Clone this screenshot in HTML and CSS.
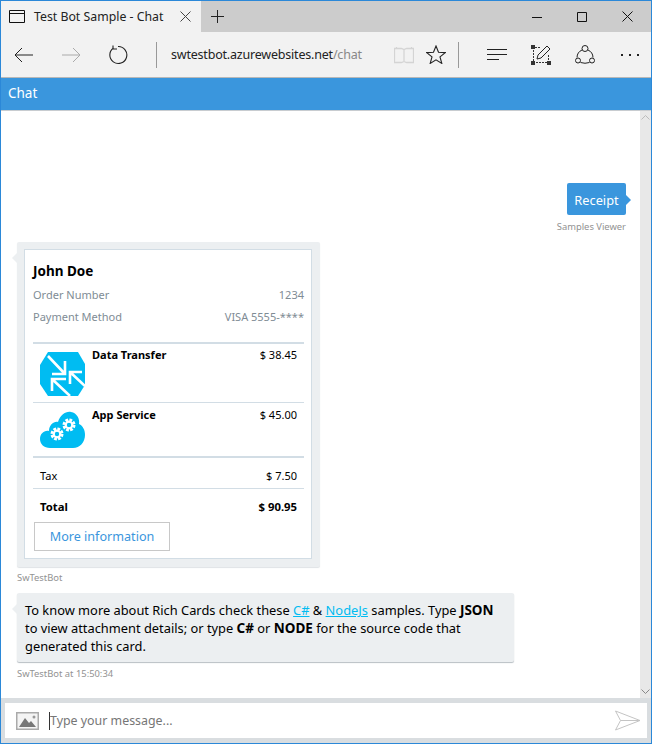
FILE: index.html
```html
<!DOCTYPE html>
<html>
<head>
<meta charset="UTF-8">
<title>Test Bot Sample - Chat</title>
<link rel="stylesheet" href="styles.css">
</head>
<body>
<div class="window">
	<!-- tabs -->
	<div class="tabbar">
		<div class="tab">
			<svg class="tabicon" width="16" height="13" viewBox="0 0 16 13"><path d="M.5.5h15v12H.5zM.5 3.500h15" fill="none" stroke="#111"/></svg>
			<span class="tabtitle">Test Bot Sample - Chat</span>
			<svg class="tabclose" width="11" height="11" viewBox="0 0 11 11"><path d="M.5.5l10 10M10.500.5l-10 10" stroke="#444" fill="none"/></svg>
		</div>
		<svg class="newtab" width="13" height="13" viewBox="0 0 13 13"><path d="M6.500 0v13M0 6.500h13" stroke="#222" fill="none"/></svg>
		<div class="wincontrols">
			<svg width="10" height="10" viewBox="0 0 10 10"><path d="M0 5.500h10" stroke="#111" fill="none"/></svg>
			<svg width="10" height="10" viewBox="0 0 10 10"><path d="M.5.5h9v9h-9z" stroke="#111" fill="none"/></svg>
			<svg width="11" height="11" viewBox="0 0 11 11"><path d="M.5.5l10 10M10.500.5l-10 10" stroke="#111" fill="none"/></svg>
		</div>
	</div>
	<!-- address bar -->
	<div class="toolbar">
		<svg class="navicon first" width="20" height="16" viewBox="0 0 20 16"><path d="M19 8H1M8 1L1 8l7 7" stroke="#222" fill="none"/></svg>
		<svg class="navicon" width="20" height="16" viewBox="0 0 20 16"><path d="M1 8h18M12 1l7 7-7 7" stroke="#aaa" fill="none"/></svg>
		<svg class="navicon" width="20" height="20" viewBox="0 0 20 20"><path d="M5.500 3A8.500 8.500 0 1 0 10 1.500M5 .5v3.500h4" stroke="#222" stroke-width="1.100" fill="none"/></svg>
		<div class="sep sep1"></div>
		<div class="url">swtestbot.azurewebsites.net<span class="urlpath">/chat</span></div>
		<svg class="readicon" width="20" height="18" viewBox="0 0 20 18"><path d="M.5 2.500h7l2.500 1 2.500-1h7v14h-7l-2.500-1-2.500 1h-7zM10 3.500v12M2.500 1v1.500M17.500 1v1.500" stroke="#d4d4d4" stroke-width="1.300" fill="none"/></svg>
		<svg class="staricon" width="20" height="19" viewBox="0 0 20 19"><path d="M10 1l2.500 6.200 6.800.4-5.300 4.300 1.800 6.500L10 14.800l-5.800 3.600L6 11.900.7 7.600l6.800-.4z" stroke="#222" stroke-width="1.100" fill="none"/></svg>
		<div class="sep"></div>
		<svg class="hubicon" width="20" height="13" viewBox="0 0 20 13"><path d="M0 1.500h20M0 6.500h20M0 11.500h12" stroke="#222" fill="none"/></svg>
		<svg class="noteicon" width="20" height="20" viewBox="0 0 20 20"><path d="M4 2.500h6M2.500 5v11M5 17.500h12M17.500 10v5" stroke="#333" stroke-dasharray="2 1" fill="none"/><path d="M0 0h4v4H0zM0 16h4v4H0zM16 16h4v4h-4z" fill="#333"/><path d="M6 14l1-4L16 1l3 3-9 9z" stroke="#222" fill="none"/></svg>
		<svg class="shareicon" width="20" height="20" viewBox="0 0 20 20"><path d="M7 5A8.500 8.500 0 0 0 2 12.500M13 5A8.500 8.500 0 0 1 18 12.500M5.500 17.500q4.500 1.500 9 0" stroke="#222" fill="none"/><circle cx="10" cy="3.500" r="3" stroke="#222" fill="none"/><circle cx="3" cy="15.500" r="2.500" stroke="#222" fill="none"/><circle cx="17" cy="15.500" r="2.500" stroke="#222" fill="none"/></svg>
		<div class="moreicon"><i></i><i></i><i></i></div>
	</div>
	<div class="appbar">Chat</div>

	<!-- chat history -->
	<div class="history">
		<div class="messages">
			<div class="outgoing">
				<div class="receipt-btn">Receipt</div>
				<div class="meta">Samples Viewer</div>
			</div>
			<div class="cardwrap">
				<div class="card">
					<div class="name">John Doe</div>
					<div class="inforow"><span>Order Number</span><span>1234</span></div>
					<div class="inforow"><span>Payment Method</span><span>VISA 5555-****</span></div>
					<div class="item item-first">
						<svg class="itemicon" width="45" height="44" viewBox="0 0 45 44">
							<path d="M8 0h30l7 12v21l-7 11H8L0 32V13z" fill="#00bcf2"/>
							<path d="M8 4l17 18M25 9v13H12M30 44L12 27M12 39V27h14M45 34L30 20M30 32V20h12" stroke="#fff" stroke-width="2.600" fill="none"/>
						</svg>
						<div class="itemname">Data Transfer</div>
						<div class="itemprice">$ 38.45</div>
					</div>
					<div class="item item-last">
						<svg class="itemicon" width="45" height="37" viewBox="0 0 45 37">
							<path d="M10 37C4 37 0 33 0 28c0-5 4-9 9-8 0-6 5-10 9-9 2-7 8-11 13-10 6 1 9 7 8 12 4 2 6 6 6 11 0 7-5 13-12 13z" fill="#00bcf2"/>
							<circle cx="17" cy="23" r="4.500" fill="none" stroke="#fff" stroke-width="4" stroke-dasharray="2.400 1.100"/>
							<circle cx="17" cy="23" r="3.300" fill="none" stroke="#fff" stroke-width="2.200"/>
							<circle cx="29" cy="14" r="4.500" fill="none" stroke="#fff" stroke-width="4" stroke-dasharray="2.400 1.100"/>
							<circle cx="29" cy="14" r="3.300" fill="none" stroke="#fff" stroke-width="2.200"/>
						</svg>
						<div class="itemname">App Service</div>
						<div class="itemprice">$ 45.00</div>
					</div>
					<div class="sumrow tax"><span>Tax</span><span>$ 7.50</span></div>
					<div class="sumrow total"><span>Total</span><span>$ 90.95</span></div>
					<div class="morebtn">More information</div>
				</div>
			</div>
			<div class="meta meta-card">SwTestBot</div>
			<div class="bubble">
				<div>To know more about Rich Cards check these <a href="#">C#</a> &amp; <a href="#">NodeJs</a> samples. Type <b>JSON</b></div>
				<div>to view attachment details; or type <b>C#</b> or <b>NODE</b> for the source code that</div>
				<div>generated this card.</div>
			</div>
			<div class="meta">SwTestBot at 15:50:34</div>
		</div>
		<div class="scrollbar">
			<svg width="9" height="5" viewBox="0 0 9 5"><path d="M.5 4.500l4-4 4 4" stroke="#bbb" fill="none"/></svg>
			<svg width="9" height="5" viewBox="0 0 9 5"><path d="M.5.500l4 4 4-4" stroke="#888" fill="none"/></svg>
		</div>
	</div>

	<!-- input -->
	<div class="inputbar">
		<div class="inputbox">
			<svg class="imgicon" width="23" height="18" viewBox="0 0 23 18"><rect x=".75" y=".75" width="21.500" height="16.500" fill="#f4f4f4" stroke="#aaa" stroke-width="1.500"/><path d="M3 15l6-9 4 5 2-2 5 6z" fill="#777"/><circle cx="18" cy="5" r="1.500" fill="#999"/></svg>
			<div class="caret"></div>
			<div class="placeholder">Type your message...</div>
			<svg class="sendicon" width="26" height="21" viewBox="0 0 26 21"><path d="M.5 1L25 10.500.5 20l5-9.500zM5.500 10.500H25" stroke="#c4c4c4" fill="none"/></svg>
		</div>
	</div>
</div>
</body>
</html>
```

FILE: styles.css
```css
html, body
{
	margin: 0;
	padding: 0;
}
body
{
	font-family: "Noto Sans", "Open Sans", sans-serif;
	background: #ffffff;
}
.window
{
	width: 652px;
	height: 744px;
	box-sizing: border-box;
	border: 1px solid #2b88d8;
	display: flex;
	flex-direction: column;
	overflow: hidden;
}
/* tabs */
.tabbar
{
	height: 31px;
	background: #cccccc;
	display: flex;
	align-items: center;
	flex: none;
}
.tab
{
	width: 200px;
	height: 31px;
	background: #f2f2f2;
	display: flex;
	align-items: center;
	flex: none;
}
.tabicon
{
	margin-left: 8px;
}
.tabtitle
{
	margin-left: 9px;
	font-size: 12.300px;
	color: #222222;
	width: 146px;
	white-space: nowrap;
}
.newtab
{
	margin-left: 10px;
}
.wincontrols
{
	margin-left: auto;
	display: flex;
	align-items: center;
	gap: 35px;
	margin-right: 18px;
}
.toolbar
{
	height: 45px;
	background: #f2f2f2;
	border-bottom: 1px solid #b8b8b8;
	display: flex;
	align-items: center;
	flex: none;
}
.navicon
{
	margin-left: 27px;
}
.navicon.first
{
	margin-left: 13px;
}
.sep
{
	width: 1px;
	height: 26px;
	background: #999999;
	margin-left: 12px;
}
.sep1
{
	margin-left: 28px;
}
.url
{
	margin-left: 14px;
	font-size: 12.500px;
	letter-spacing: -0.2px;
	color: #222222;
	width: 223px;
	white-space: nowrap;
}
.urlpath
{
	color: #888888;
}
.readicon
{
	margin-left: 0;
}
.staricon
{
	margin-left: 12px;
}
.hubicon
{
	margin-left: 28px;
}
.noteicon
{
	margin-left: 24px;
}
.shareicon
{
	margin-left: 24px;
}
.moreicon
{
	margin-left: 26px;
	display: flex;
	gap: 6px;
}
.moreicon i
{
	width: 2px;
	height: 2px;
	background: #222222;
	display: block;
}
.appbar
{
	height: 33px;
	line-height: 31px;
	box-sizing: border-box;
	background: #3a96dd;
	border-bottom: 1px solid #c8ccd0;
	color: #ffffff;
	font-size: 13.500px;
	padding-left: 7px;
	flex: none;
}
/* history */
.history
{
	flex: 1;
	display: flex;
	min-height: 0;
	background: #ffffff;
}
.messages
{
	flex: 1;
	padding: 72px 14px 0 16px;
	min-width: 0;
}
.scrollbar
{
	width: 11px;
	background: #e8e8e8;
	display: flex;
	flex-direction: column;
	justify-content: space-between;
	align-items: center;
	padding: 4px 0;
	box-sizing: border-box;
}
.outgoing
{
	display: flex;
	flex-direction: column;
	align-items: flex-end;
}
.receipt-btn
{
	position: relative;
	width: 59px;
	height: 32px;
	line-height: 34px;
	text-align: center;
	background: #3a96dd;
	color: #ffffff;
	font-size: 12.800px;
	border-radius: 2px;
}
.receipt-btn::after
{
	content: "";
	position: absolute;
	right: -5px;
	top: 12px;
	border-left: 5px solid #3a96dd;
	border-top: 5px solid transparent;
	border-bottom: 5px solid transparent;
}
.meta
{
	font-size: 9.400px;
	color: #929292;
	line-height: 12px;
	margin-top: 6px;
}
.meta-card
{
	margin-top: 5px;
}
.cardwrap
{
	position: relative;
	width: 303px;
	margin-top: 9px;
	padding: 7px 8px 8px 7px;
	box-sizing: border-box;
	background: #eceff1;
	border-radius: 2px;
	box-shadow: 0 1px 1px #dfe3e6;
}
.cardwrap::before
{
	content: "";
	position: absolute;
	left: -5px;
	top: 11px;
	border-right: 5px solid #eceff1;
	border-top: 5px solid transparent;
	border-bottom: 5px solid transparent;
}
.card
{
	background: #ffffff;
	border: 1px solid #d2dde5;
	padding: 13px 7px 9px 8px;
	height: 310px;
	box-sizing: border-box;
}
.name
{
	font-size: 13.500px;
	font-weight: bold;
	color: #000000;
	line-height: 17px;
	margin-bottom: 4px;
}
.inforow
{
	display: flex;
	justify-content: space-between;
	font-size: 11px;
	color: #808c95;
	line-height: 22px;
}
.item
{
	display: flex;
	border-top: 1px solid #d2dde5;
	padding: 4px 7px 0 7px;
	height: 54px;
	box-sizing: border-box;
	font-size: 11px;
	color: #000000;
}
.item-first
{
	border-top: 2px solid #d2dde5;
	margin-top: 14px;
	padding-top: 3px;
	height: 60px;
}
.itemicon
{
	margin-top: 4px;
	flex: none;
}
.item-first .itemicon
{
	margin-top: 5px;
}
.itemname
{
	margin-left: 7px;
	font-weight: bold;
	flex: 1;
	line-height: 15px;
}
.itemprice
{
	line-height: 15px;
}
.sumrow
{
	display: flex;
	justify-content: space-between;
	font-size: 11px;
	color: #000000;
	padding: 0 7px;
}
.tax
{
	border-top: 2px solid #d2dde5;
	border-bottom: 1px solid #d2dde5;
	height: 33px;
	line-height: 35px;
	box-sizing: border-box;
}
.total
{
	font-weight: bold;
	font-size: 11.300px;
	line-height: 36px;
	height: 33px;
}
.morebtn
{
	width: 136px;
	height: 29px;
	line-height: 28px;
	margin-left: 1px;
	box-sizing: border-box;
	border: 1px solid #c8c8c8;
	text-align: center;
	color: #3a96dd;
	font-size: 12.600px;
}
.bubble
{
	width: 497px;
	box-sizing: border-box;
	position: relative;
	background: #eceff1;
	margin-top: 9px;
	padding: 8px 8px 7px 8px;
	font-size: 12.850px;
	line-height: 18px;
	color: #000000;
	border-radius: 2px;
	box-shadow: 0 1px 1px #b8bfc4;
	white-space: nowrap;
}
.bubble::before
{
	content: "";
	position: absolute;
	left: -5px;
	top: 11px;
	border-right: 5px solid #eceff1;
	border-top: 5px solid transparent;
	border-bottom: 5px solid transparent;
}
.bubble a
{
	color: #00bcf2;
}
.bubble b
{
	font-size: 13.500px;
}
/* input */
.inputbar
{
	height: 45px;
	background: #d9dde0;
	flex: none;
	padding: 5px 4px 4px 4px;
	box-sizing: border-box;
}
.inputbox
{
	background: #ffffff;
	height: 35px;
	display: flex;
	align-items: center;
}
.imgicon
{
	margin-left: 11px;
	flex: none;
}
.caret
{
	width: 1px;
	height: 18px;
	background: #333333;
	margin-left: 10px;
}
.placeholder
{
	font-size: 12.400px;
	color: #767676;
	flex: 1;
}
.sendicon
{
	margin-right: 6px;
}
```
